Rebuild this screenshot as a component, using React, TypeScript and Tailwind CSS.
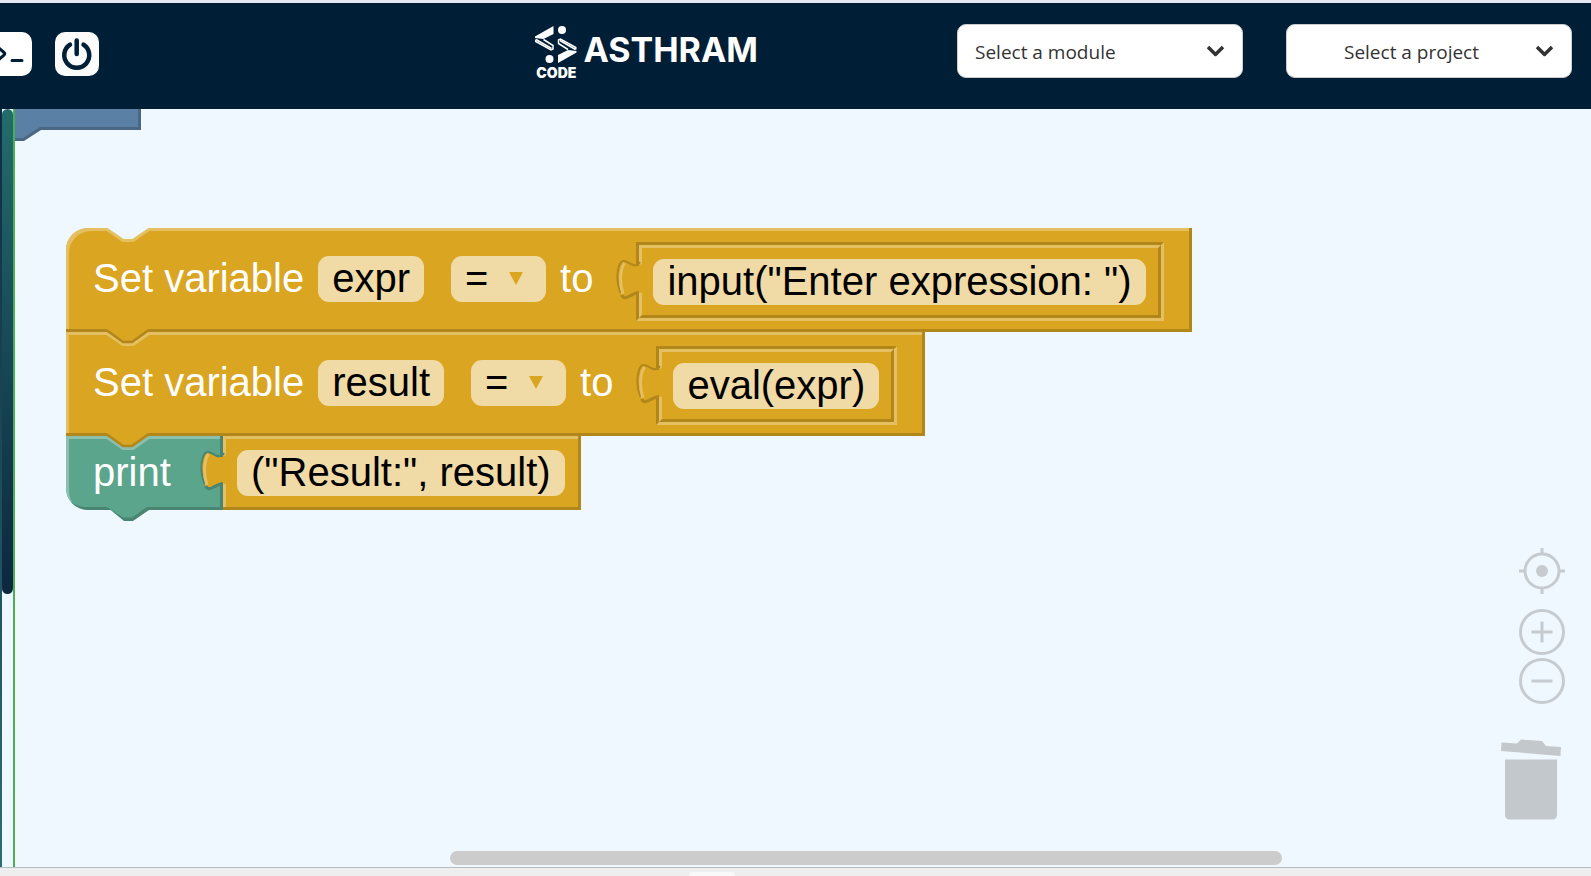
import type { ReactNode } from "react";

const GOLD = "#daa520";
const GOLD_LIGHT = "#e5c063";
const GOLD_DARK = "#b1861b";
const TEAL = "#5ba58c";
const TEAL_LIGHT = "#8cc0ae";
const TEAL_DARK = "#4a8571";
const CANVAS = "#f0f8ff";

function LogoArrow() {
  return (
    <>
      <path d="M18.500 0v8L8.500 13 0 12v-1.500z" fill="currentColor" stroke="none" />
      <path d="M.700 13.500v2L16 24l2-1v-3.500L8.500 13.500" fill="none" stroke="currentColor" strokeWidth="1.500" />
      <path d="M1 13.500l15.500 9" fill="none" stroke="currentColor" strokeWidth="1.500" />
    </>
  );
}

function Logo() {
  return (
    <a href="#" aria-label="Asthram Code" className="flex items-start gap-[6px] text-white">
      <span className="flex flex-col items-center">
        <svg width="42" height="38" viewBox="0 0 42 38" aria-hidden="true">
          <LogoArrow />
          <g transform="rotate(180 20.750 18.500)">
            <LogoArrow />
          </g>
          <circle cx="27" cy="4" r="4" fill="currentColor" />
          <circle cx="14.500" cy="33" r="4" fill="currentColor" />
        </svg>
        <span className="pt-[3px] font-[Inter,sans-serif] text-[14px] leading-3 font-black">CODE</span>
      </span>
      <span className="pt-1 font-[Inter,sans-serif] text-[34px] leading-10 font-bold">ASTHRAM</span>
    </a>
  );
}

function Picker({ label, centered }: { label: string; centered?: boolean }) {
  return (
    <div className="relative">
      <select
        aria-label={label}
        className={
          "h-[54px] w-[286px] appearance-none rounded-[9px] border border-[#ccc] bg-white pt-[2px] font-['Open_Sans',sans-serif] text-[19px] text-[#333] " +
          (centered ? "pr-[35px] text-center" : "pl-[17px]")
        }
      >
        <option>{label}</option>
      </select>
      <svg className="pointer-events-none absolute top-5 right-[18px]" width="19" height="14" viewBox="0 0 19 14" fill="none" stroke="#333" strokeWidth="3.500" strokeLinejoin="round" aria-hidden="true">
        <path d="M2 3l7.500 7.500L17 3" />
      </svg>
    </div>
  );
}

function NotchTop({ fill, light, dark }: { fill: string; light: string; dark?: string }) {
  return (
    <svg className="absolute -top-[3px] left-[41px]" width="42" height="18" viewBox="0 -3 42 18" aria-hidden="true">
      <path d="M0-3V0L16 11h10L42 0V-3z" fill={fill} />
      <path d="M0 1.500L16 12.500h10L42 1.500" fill="none" stroke={light} strokeWidth="3" />
      {dark && <path d="M0-1.500L16 10h9L41-1.500h1" fill="none" stroke={dark} strokeWidth="2.500" />}
    </svg>
  );
}

function Tab({ fill, light, dark }: { fill: string; light: string; dark: string }) {
  return (
    <svg className="absolute top-[13px] -left-[23px]" width="29" height="44" viewBox="0 0 29 44" aria-hidden="true">
      <path d="M29 4L22 8C12 6 7 0 3 8Q-1 22 5 36C9 44 15 37 22 34L29 36z" fill={fill} />
      <path d="M24 4Q21 9 16 6.500C10 3.500 6 0 3 8Q-1 21 4.500 35" fill="none" stroke={dark} strokeWidth="2" />
      <path d="M5.500 37C9 44 15 35 23 34.500" fill="none" stroke={dark} strokeWidth="3" />
      <path d="M8.500 5C3 13 4 28 7 36" fill="none" stroke={light} strokeWidth="3" />
    </svg>
  );
}

function Field({ children }: { children: ReactNode }) {
  return (
    <button type="button" className="block h-[46px] shrink-0 rounded-[11px] bg-[#f0daa6] px-[14px] pb-[2px] leading-[44px] whitespace-pre text-black">
      {children}
    </button>
  );
}

function Operator() {
  return (
    <button type="button" className="flex h-[46px] w-[95px] shrink-0 justify-between rounded-[11px] bg-[#f0daa6] pr-[23px] pb-[2px] pl-[14px] leading-[44px] text-black">
      =
      <svg className="mt-4" width="14" height="13" viewBox="0 0 14 13" fill={GOLD} aria-hidden="true">
        <path d="M0 0h14L7 13z" />
      </svg>
    </button>
  );
}

function SetVariable({ name, value, first }: { name: string; value: string; first?: boolean }) {
  return (
    <div
      className={
        "relative flex h-[104px] w-max items-start bg-[#daa520] pt-7 pr-7 pl-[27px] shadow-[inset_-3px_-3px_0_#b1861b,inset_3px_3px_0_#e5c063] " +
        (first ? "rounded-tl-[22px]" : "")
      }
    >
      <NotchTop fill={first ? CANVAS : GOLD} light={GOLD_LIGHT} dark={first ? undefined : GOLD_DARK} />
      <span className="mr-[14px] leading-[44px]">Set variable</span>
      <Field>{name}</Field>
      <span className="w-[27px]" />
      <Operator />
      <span className="mr-[43px] ml-[14px] leading-[44px]">to</span>
      <div className="relative -mt-[14px] border-[3px] border-t-[#b1861b] border-r-[#e5c063] border-b-[#e5c063] border-l-[#b1861b]">
        <div className="border-[3px] border-t-[#e5c063] border-r-[#b1861b] border-b-[#b1861b] border-l-[#e5c063] pt-[11px] pr-3 pb-[10px] pl-[11px]">
          <Field>{value}</Field>
        </div>
        <Tab fill={GOLD} light={GOLD_LIGHT} dark={GOLD_DARK} />
      </div>
    </div>
  );
}

function Print({ value }: { value: string }) {
  return (
    <div className="flex">
      <div className="relative h-[74px] w-[157px] rounded-bl-[22px] bg-[#5ba58c] pt-[14px] pl-[27px] leading-[44px] shadow-[inset_-3px_-3px_0_#4a8571,inset_3px_3px_0_#8cc0ae]">
        print
        <NotchTop fill={GOLD} light={TEAL_LIGHT} dark={GOLD_DARK} />
        <svg className="absolute top-[71px] left-[41px]" width="42" height="14" viewBox="0 0 42 14" aria-hidden="true">
          <path d="M0 0L17 14h9L42 3V0z" fill={TEAL_DARK} />
          <path d="M0 0L16 10.500h9L40 0z" fill={TEAL} />
        </svg>
      </div>
      <div className="relative h-[74px] bg-[#daa520] pt-[14px] pr-4 pl-[14px] shadow-[inset_-3px_-3px_0_#b1861b,inset_3px_3px_0_#e5c063]">
        <Field>{value}</Field>
        <Tab fill={GOLD} light={GOLD_LIGHT} dark={TEAL_DARK} />
      </div>
    </div>
  );
}

function CanvasControls() {
  return (
    <div className="absolute right-[26px] bottom-[46px] flex flex-col items-end text-[#c6cbcf]">
      <button type="button" aria-label="Center workspace">
        <svg width="46" height="46" viewBox="0 0 46 46" fill="none" stroke="currentColor" strokeWidth="3" aria-hidden="true">
          <circle cx="23" cy="23" r="17" />
          <path d="M23 0v6M23 40v6M0 23h6M40 23h6" />
          <circle cx="23" cy="23" r="6" fill="currentColor" stroke="none" />
        </svg>
      </button>
      <button type="button" aria-label="Zoom in" className="mt-[15px]">
        <svg width="46" height="46" viewBox="0 0 46 46" fill="none" stroke="currentColor" strokeWidth="3" aria-hidden="true">
          <circle cx="23" cy="23" r="21.500" />
          <path d="M12.500 23h21M23 12.500v21" />
        </svg>
      </button>
      <button type="button" aria-label="Zoom out" className="mt-[3px]">
        <svg width="46" height="46" viewBox="0 0 46 46" fill="none" stroke="currentColor" strokeWidth="3" aria-hidden="true">
          <circle cx="23" cy="23" r="21.500" />
          <path d="M12.500 23h21" />
        </svg>
      </button>
      <button type="button" aria-label="Trash" className="mt-[35px] mr-1">
        <svg width="61" height="82" viewBox="0 0 61 82" fill="#c3c8cc" aria-hidden="true">
          <path d="M1.500 3.500l15.500 1L21 .500 42 2l4 5 15 1-.500 9L1 12z" />
          <path d="M5 20.500h52v55q0 5-5 5H10q-5 0-5-5z" />
        </svg>
      </button>
    </div>
  );
}

export default function App() {
  return (
    <div className="flex h-screen flex-col overflow-hidden bg-[#f0f8ff]">
      <div className="h-[3px] shrink-0 bg-[#e4e9f0]" />
      <header className="flex h-[106px] shrink-0 items-start bg-[#001e36] pr-[19px]">
        <nav className="flex flex-1 gap-[23px] pt-[29px]">
          <button type="button" aria-label="Terminal" className="h-11 w-8 rounded-r-[10px] bg-white">
            <svg width="32" height="44" viewBox="0 0 32 44" fill="none" stroke="#001e36" strokeWidth="3" strokeLinecap="round" aria-hidden="true">
              <path d="M-3 14.500l7 6q1.500 1.300 0 2.600l-7 6M12 28.500h10" />
            </svg>
          </button>
          <button type="button" aria-label="Stop" className="size-11 rounded-[10px] bg-[#fbfbfb]">
            <svg width="44" height="44" viewBox="0 0 44 44" fill="none" stroke="#001e36" strokeWidth="4.500" strokeLinecap="round" aria-hidden="true">
              <path d="M15 12.700A12.500 12.500 0 1 0 28.500 12.700M21.700 8.500V22" />
            </svg>
          </button>
        </nav>
        <div className="pt-[23px] pr-[199px]">
          <Logo />
        </div>
        <div className="flex gap-[43px] pt-[21px]">
          <Picker label="Select a module" />
          <Picker label="Select a project" centered />
        </div>
      </header>
      <main className="flex min-h-0 flex-1">
        <div className="w-[2px] bg-linear-to-b from-[#0d2c42] to-[#2b6f72]" />
        <div className="w-[11px]">
          <div className="h-[64%] rounded-full bg-linear-to-b from-[#246c6c] to-[#0d2740]" />
        </div>
        <div className="w-[2px] bg-[#4caf50]" />
        <section aria-label="Workspace" className="relative min-w-0 flex-1 overflow-hidden">
          <svg className="absolute top-0 left-0" width="126" height="32" viewBox="0 0 126 32" aria-hidden="true">
            <path d="M0 0h126v21H26L9 32H0z" fill="#4a6785" />
            <path d="M0 0h123v18H25L8 29H0z" fill="#5b80a5" />
          </svg>
          <div className="pt-[119px] pl-[51px] font-['Liberation_Sans',Arial,sans-serif] text-[40px] text-white">
            <SetVariable name="expr" value={'input("Enter expression: ")'} first />
            <SetVariable name="result" value="eval(expr)" />
            <Print value={'("Result:", result)'} />
          </div>
          <CanvasControls />
          <div className="absolute bottom-[2px] left-[435px] h-[14px] w-[832px] rounded-full bg-[#ccc]" />
        </section>
      </main>
      <footer className="h-[9px] shrink-0 border-t border-[#b8bdc1] bg-[#eee] pt-1">
        <div className="ml-[689px] h-1 w-[46px] rounded-t bg-[#f9f9f9]" />
      </footer>
    </div>
  );
}
